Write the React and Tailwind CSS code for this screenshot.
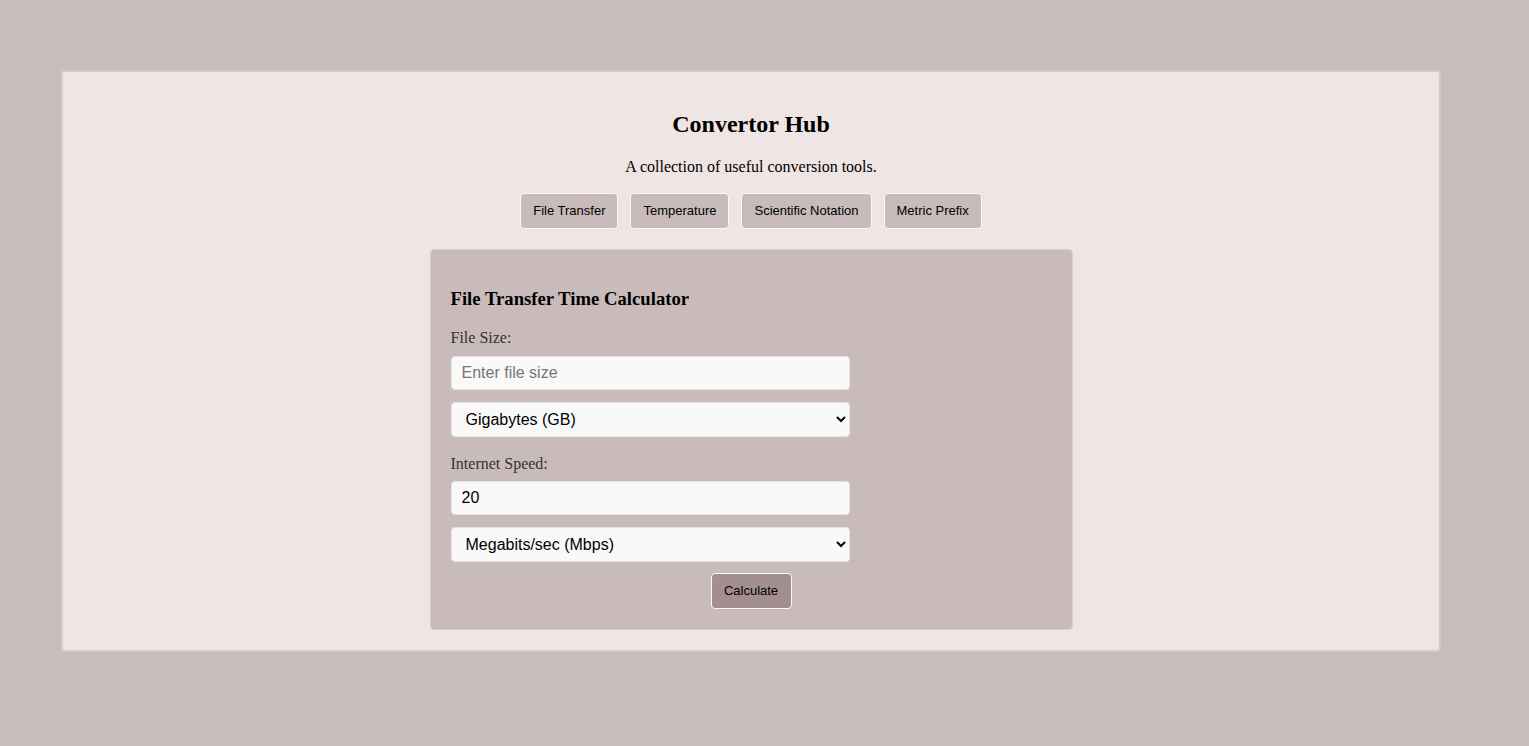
import React from "react";

export default function App() {
  const serif = { fontFamily: '"Liberation Serif", "Times New Roman", serif' };
  return (
    <div className="min-h-[746px] w-full bg-[#c9bcbc] pt-[70px] pb-[94px]" style={serif}>
      <div className="ml-[61px] w-[1380px] rounded-[4px] border-2 border-[#d3cccc] bg-[#efe5e4] px-[20px] pt-[20px] pb-[20px] text-center">
        <h2 className="mt-[18px] mb-[20px] text-[24px] leading-[28px] font-bold text-black [font-family:'Liberation_Serif',serif]">
          Convertor Hub
        </h2>
        <p className="mb-[17px] text-[16px] leading-[18px] text-black [font-family:'Liberation_Serif',serif]">
          A collection of useful conversion tools.
        </p>
        <div className="mb-[20px] flex justify-center gap-[12px] [font-family:'Liberation_Sans',Arial,sans-serif]">
          {["File Transfer", "Temperature", "Scientific Notation", "Metric Prefix"].map((t) => (
            <button
              key={t}
              className="h-[36px] rounded-[4px] border border-[#fbf8f8] bg-[#c9bbbb] px-[12px] text-[13px] text-black"
            >
              {t}
            </button>
          ))}
        </div>
        <div className="mx-auto w-[643px] rounded-[4px] border border-[#d6cfcf] bg-[#c9bbbb] p-[20px] text-left">
          <h3 className="mt-[18px] mb-[20px] text-[18.7px] leading-[21px] font-bold text-black [font-family:'Liberation_Serif',serif]">
            File Transfer Time Calculator
          </h3>
          <label className="mb-[9px] block text-[16px] leading-[18px] text-[#333] [font-family:'Liberation_Serif',serif]">
            File Size:
          </label>
          <input
            type="text"
            placeholder="Enter file size"
            className="mb-[12px] block h-[34px] w-[399px] rounded-[4px] border border-[#e8e2e2] bg-[#f9f9f9] px-[10px] text-[16px] text-black placeholder:text-[#767676] outline-none [font-family:'Liberation_Sans',Arial,sans-serif]"
          />
          <select
            defaultValue="GB"
            className="mb-[18px] block h-[35px] w-[399px] rounded-[4px] border border-[#e8e2e2] bg-[#f9f9f9] px-[10px] text-[16px] text-black outline-none [font-family:'Liberation_Sans',Arial,sans-serif]"
          >
            <option value="B">Bytes (B)</option>
            <option value="KB">Kilobytes (KB)</option>
            <option value="MB">Megabytes (MB)</option>
            <option value="GB">Gigabytes (GB)</option>
            <option value="TB">Terabytes (TB)</option>
          </select>
          <label className="mb-[8px] block text-[16px] leading-[18px] text-[#333] [font-family:'Liberation_Serif',serif]">
            Internet Speed:
          </label>
          <input
            type="text"
            defaultValue="20"
            className="mb-[12px] block h-[34px] w-[399px] rounded-[4px] border border-[#e8e2e2] bg-[#f9f9f9] px-[10px] text-[16px] text-black outline-none [font-family:'Liberation_Sans',Arial,sans-serif]"
          />
          <select
            defaultValue="Mbps"
            className="mb-[11px] block h-[35px] w-[399px] rounded-[4px] border border-[#e8e2e2] bg-[#f9f9f9] px-[10px] text-[16px] text-black outline-none [font-family:'Liberation_Sans',Arial,sans-serif]"
          >
            <option value="Kbps">Kilobits/sec (Kbps)</option>
            <option value="Mbps">Megabits/sec (Mbps)</option>
            <option value="Gbps">Gigabits/sec (Gbps)</option>
          </select>
          <div className="flex justify-center">
            <button className="h-[36px] w-[81px] rounded-[4px] border border-[#fbf8f8] bg-[#a38f8f] text-[13px] text-black [font-family:'Liberation_Sans',Arial,sans-serif]">
              Calculate
            </button>
          </div>
        </div>
      </div>
    </div>
  );
}
